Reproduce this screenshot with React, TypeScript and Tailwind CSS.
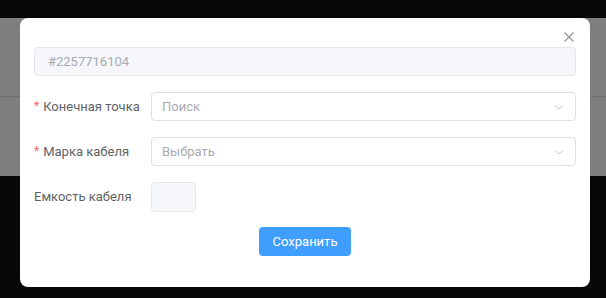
import React from "react";

const font = { fontFamily: 'Roboto, "Noto Sans", sans-serif' };

function Chevron() {
  return (
    <svg width="12" height="12" viewBox="0 0 12 12" fill="none" className="text-[#c0c4cc]">
      <path d="M2 4.5 L6 8 L10 4.5" stroke="currentColor" strokeWidth="1" />
    </svg>
  );
}

function Row({ label, required, children }: { label: string; required?: boolean; children: React.ReactNode }) {
  return (
    <div className="flex items-center">
      <div className="w-[117px] shrink-0 text-[13px] text-[#606266] flex items-center">
        {required && <span className="text-[#f56c6c] mr-[4px] text-[12px] relative top-[-1px]">*</span>}
        <span>{label}</span>
      </div>
      {children}
    </div>
  );
}

function Select({ placeholder }: { placeholder: string }) {
  return (
    <div className="flex-1 h-[29px] border border-[#dcdfe6] rounded-[4px] bg-white flex items-center justify-between pl-[10px] pr-[10px]">
      <span className="text-[13px] text-[#a8abb2]">{placeholder}</span>
      <Chevron />
    </div>
  );
}

export default function App() {
  return (
    <div className="relative w-[606px] h-[298px] overflow-hidden bg-[#080808]" style={font}>
      <div className="flex flex-col">
        <div className="h-[18px] bg-[#070707]" />
        <div className="h-[158px] bg-[#7e7e7e] flex flex-col">
          <div className="h-[79px] border-b border-[#6f6f6f]" />
        </div>
      </div>

      <div className="absolute left-[20px] top-[18px] w-[570px] h-[269px] bg-white rounded-[8px] px-[14px] pt-[29px]">
        <button className="absolute right-[15px] top-[13px] text-[#909399]">
          <svg width="12" height="12" viewBox="0 0 12 12" fill="none">
            <path d="M1.5 1.5 L10.5 10.5 M10.5 1.5 L1.5 10.5" stroke="currentColor" strokeWidth="1.1" />
          </svg>
        </button>

        <div className="h-[29px] bg-[#f5f7fa] border border-[#e4e7ed] rounded-[4px] flex items-center pl-[13px] text-[13px] text-[#a8abb2]">
          #2257716104
        </div>

        <div className="mt-[16px] flex flex-col gap-[16px]">
          <Row label="Конечная точка" required>
            <Select placeholder="Поиск" />
          </Row>
          <Row label="Марка кабеля" required>
            <Select placeholder="Выбрать" />
          </Row>
          <Row label="Емкость кабеля">
            <div className="w-[45px] h-[30px] bg-[#f5f7fa] border border-[#e4e7ed] rounded-[4px]" />
          </Row>
        </div>

        <div className="mt-[15px] flex justify-center">
          <button className="w-[92px] h-[29px] rounded-[4px] bg-[#409eff] text-white text-[13px]">
            Сохранить
          </button>
        </div>
      </div>
    </div>
  );
}
